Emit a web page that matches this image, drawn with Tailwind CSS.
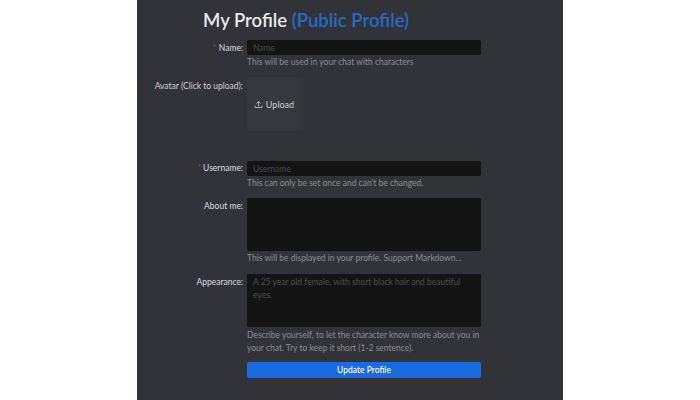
<!DOCTYPE html>
<html lang="en">
<head>
  <meta charset="UTF-8">
  <title>My Profile</title>
  <script src="https://cdn.jsdelivr.net/npm/@tailwindcss/browser@4"></script>
</head>
<body class="bg-white h-[400px] overflow-hidden font-['Lato',sans-serif]">
  <main class="mx-auto w-[426px] h-[400px] bg-[#323338] pl-[110px] pr-[82px] pt-[9px]">
    <h1 class="-ml-[44px] mb-[9px] h-[22px] text-[18.5px] leading-[22px] font-semibold text-[#e8e9ec]">My Profile <span class="text-[#2a68c8]">(Public Profile)</span></h1>

    <form class="grid grid-cols-[234px] text-[8.5px] leading-[13px] text-[#8b8c90]">
      <div class="relative">
        <label class="absolute right-[238px] top-[2px] whitespace-nowrap text-[#dcdde0]"><span class="text-[#a83a44] mr-[3px]">*</span>Name:</label>
        <input placeholder="Name" class="block w-full h-[15px] rounded-[2px] bg-[#141414] px-[6px] text-[8.5px] placeholder:text-[#4a4a4c] outline-none">
        <p class="mt-[1px] h-[21px]">This will be used in your chat with characters</p>
      </div>

      <div class="relative">
        <label class="absolute right-[238px] top-[3px] whitespace-nowrap text-[#cfd0d3]">Avatar (Click to upload):</label>
        <div class="w-[54px] h-[54px] rounded-[4px] bg-[#37383d] flex items-center justify-center gap-[3px] text-[9px] text-[#cfd0d3]">
          <svg width="9" height="9" viewBox="0 0 24 24" fill="none" stroke="#cfd0d3" stroke-width="2" stroke-linecap="round" stroke-linejoin="round"><path d="M12 16V4M7 9l5-5 5 5M3 16v4h18v-4"/></svg>
          <span>Upload</span>
        </div>
        <div class="h-[30px]"></div>
      </div>

      <div class="relative">
        <label class="absolute right-[238px] top-[1px] whitespace-nowrap text-[#dcdde0]"><span class="text-[#a83a44] mr-[2px]">*</span>Username:</label>
        <input placeholder="Username" class="block w-full h-[15px] rounded-[2px] bg-[#141414] px-[6px] text-[8.5px] placeholder:text-[#4a4a4c] outline-none">
        <p class="mt-[1px] h-[21px]">This can only be set once and can't be changed.</p>
      </div>

      <div class="relative">
        <label class="absolute right-[238px] top-[2px] whitespace-nowrap text-[#dcdde0]">About me:</label>
        <textarea class="block w-full h-[53px] resize-none rounded-[2px] bg-[#141414] px-[6px] pt-[2px] outline-none"></textarea>
        <p class="mt-[1px] h-[22px]">This will be displayed in your profile. Support Markdown...</p>
      </div>

      <div class="relative">
        <label class="absolute right-[238px] top-[2px] whitespace-nowrap text-[#dcdde0]">Appearance:</label>
        <textarea placeholder="A 25 year old female, with short black hair and beautiful eyes." class="block w-full h-[53px] resize-none rounded-[2px] bg-[#141414] px-[6px] pt-[2px] leading-[13px] placeholder:text-[#4f4f51] outline-none"></textarea>
        <p class="mt-[2px] h-[33px]">Describe yourself, to let the character know more about you in your chat. Try to keep it short (1-2 sentence).</p>
      </div>

      <button type="button" class="h-[16px] rounded-[2px] bg-[#1a6ae0] text-[8.5px] font-medium text-white">Update Profile</button>
    </form>
  </main>
</body>
</html>
